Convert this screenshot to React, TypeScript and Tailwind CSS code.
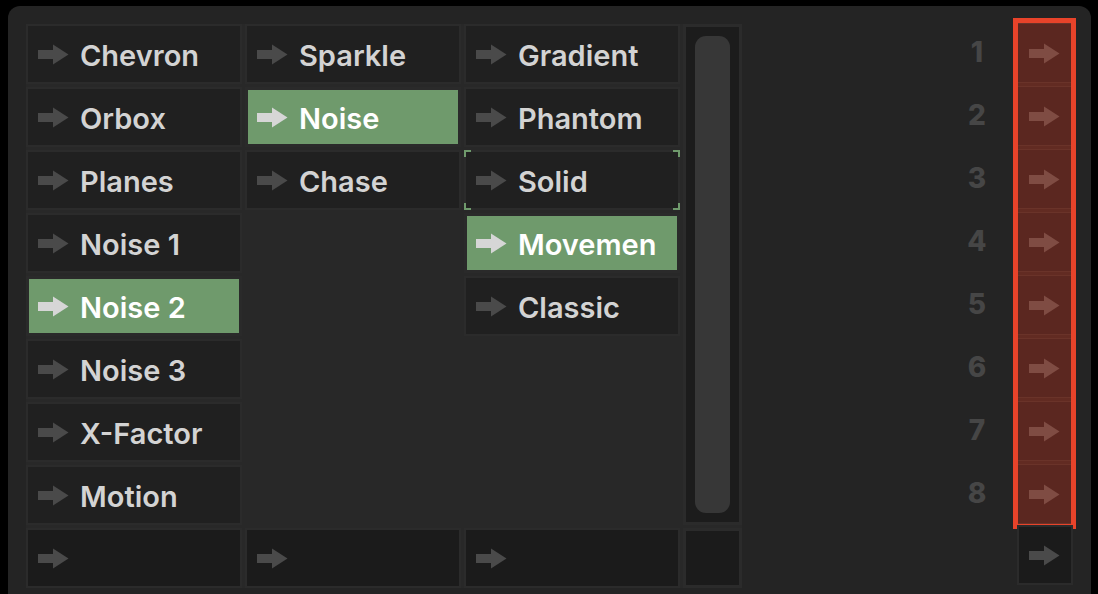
import React from "react";

type Cell = { label?: string; selected?: boolean; focused?: boolean } | null;

const Arrow = ({ color }: { color: string }) => (
  <svg width="31" height="21" viewBox="0 0 31 21" className="shrink-0">
    <rect x="0" y="6" width="17" height="9" fill={color} />
    <path d="M15 0.5 L30.5 10.5 L15 20.5 Z" fill={color} />
  </svg>
);

const columns: Cell[][] = [
  [
    { label: "Chevron" },
    { label: "Orbox" },
    { label: "Planes" },
    { label: "Noise 1" },
    { label: "Noise 2", selected: true },
    { label: "Noise 3" },
    { label: "X-Factor" },
    { label: "Motion" },
  ],
  [
    { label: "Sparkle" },
    { label: "Noise", selected: true },
    { label: "Chase" },
    null,
    null,
    null,
    null,
    null,
  ],
  [
    { label: "Gradient" },
    { label: "Phantom" },
    { label: "Solid", focused: true },
    { label: "Movemen", selected: true },
    { label: "Classic" },
    null,
    null,
    null,
  ],
];

function ClipCell({ cell }: { cell: Cell }) {
  if (!cell) return <div className="h-[60px]" />;
  if (cell.selected) {
    return (
      <div className="h-[60px] border-[3px] border-[#2a2a2a] bg-[#2a2a2a]">
        <div className="flex h-full items-center gap-[11px] bg-[#6f9a6c] pl-[9px]">
          <Arrow color="#d6d6d6" />
          <span className="pt-[2px] text-[29px] font-semibold leading-none text-white">{cell.label}</span>
        </div>
      </div>
    );
  }
  return (
    <div className="relative flex h-[60px] items-center gap-[11px] border-2 border-[#2b2b2b] bg-[#202020] pl-[10px]">
      <Arrow color="#4a4a4a" />
      <span className="pt-[2px] text-[29px] font-semibold leading-none text-[#d3d3d3]">{cell.label}</span>
      {cell.focused && (
        <>
          <span className="absolute left-[-2px] top-[-2px] h-[7px] w-[7px] border-l-2 border-t-2 border-[#6f9a6c]" />
          <span className="absolute right-[-2px] top-[-2px] h-[7px] w-[7px] border-r-2 border-t-2 border-[#6f9a6c]" />
          <span className="absolute bottom-[-2px] left-[-2px] h-[7px] w-[7px] border-b-2 border-l-2 border-[#6f9a6c]" />
          <span className="absolute bottom-[-2px] right-[-2px] h-[7px] w-[7px] border-b-2 border-r-2 border-[#6f9a6c]" />
        </>
      )}
    </div>
  );
}

export default function App() {
  return (
    <div
      className="h-[594px] w-[1098px] overflow-hidden bg-black pl-[8px] pt-[6px]"
      style={{ fontFamily: "Inter, 'Noto Sans', sans-serif" }}
    >
      <div className="flex h-[620px] w-[1083px] rounded-[12px] bg-[#242424] pl-[18px] pt-[18px]">
        {/* clip grid */}
        <div className="flex h-fit gap-[3px] bg-[#282828]">
          {columns.map((col, ci) => (
            <div key={ci} className="flex w-[216px] flex-col gap-[3px]">
              {col.map((cell, ri) => (
                <ClipCell key={ri} cell={cell} />
              ))}
              <div className="flex h-[60px] items-center border-2 border-[#2b2b2b] bg-[#1b1b1b] pl-[10px]">
                <Arrow color="#4a4a4a" />
              </div>
            </div>
          ))}
          <div className="flex w-[59px] flex-col gap-[3px]">
            <div className="h-[501px] border-[3px] border-[#2b2b2b] bg-[#1c1c1c] px-[9px] py-[9px]">
              <div className="h-full w-full rounded-[11px] bg-[#373737]" />
            </div>
            <div className="h-[60px] border-[3px] border-[#2b2b2b] bg-[#1b1b1b]" />
          </div>
        </div>

        {/* scene numbers */}
        <div className="ml-[215px] flex w-[40px] flex-col gap-[3px]">
          {[1, 2, 3, 4, 5, 6, 7, 8].map((n) => (
            <div
              key={n}
              className="flex h-[60px] items-center justify-center pb-[4px] text-[28px] font-extrabold leading-none text-[#464646]"
            >
              {n}
            </div>
          ))}
        </div>

        {/* scene launch column */}
        <div className="ml-[16px] mt-[-6px] flex h-fit w-[63px] flex-col items-center">
          <div className="w-[63px] border-[5px] border-[#e8432a]">
            <div className="flex flex-col gap-[3px] bg-[#622b22]">
              {[1, 2, 3, 4, 5, 6, 7, 8].map((n) => (
                <div
                  key={n}
                  className="flex h-[60px] items-center justify-center border-y border-[#6a3329] bg-[#5b2720]"
                >
                  <Arrow color="#7f4c43" />
                </div>
              ))}
            </div>
          </div>
          <div className="mt-[-4px] flex h-[60px] w-[56px] items-center justify-center border-2 border-[#2b2b2b] bg-[#1b1b1b]">
            <Arrow color="#4a4a4a" />
          </div>
        </div>
      </div>
    </div>
  );
}
